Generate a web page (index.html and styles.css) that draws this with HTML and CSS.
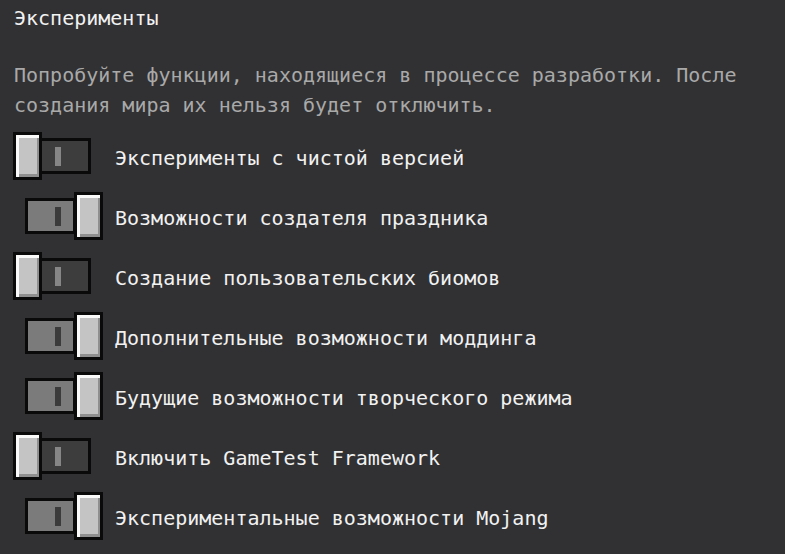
FILE: index.html
```html
<!DOCTYPE html>
<html lang="ru">
<head>
    <meta charset="UTF-8">
    <title>Эксперименты</title>
    <link rel="stylesheet" href="styles.css">
</head>
<body>

<div class="page">
    <h1 class="title">Эксперименты</h1>
    <p class="desc">Попробуйте функции, находящиеся в процессе разработки. После создания мира их нельзя будет отключить.</p>

    <div class="row">
        <div class="toggle off"><span class="knob"></span><span class="track"><i></i></span></div>
        <span class="label">Эксперименты с чистой версией</span>
    </div>
    <div class="row">
        <div class="toggle on"><span class="track"><i></i></span><span class="knob"></span></div>
        <span class="label">Возможности создателя праздника</span>
    </div>
    <div class="row">
        <div class="toggle off"><span class="knob"></span><span class="track"><i></i></span></div>
        <span class="label">Создание пользовательских биомов</span>
    </div>
    <div class="row">
        <div class="toggle on"><span class="track"><i></i></span><span class="knob"></span></div>
        <span class="label">Дополнительные возможности моддинга</span>
    </div>
    <div class="row">
        <div class="toggle on"><span class="track"><i></i></span><span class="knob"></span></div>
        <span class="label">Будущие возможности творческого режима</span>
    </div>
    <div class="row">
        <div class="toggle off"><span class="knob"></span><span class="track"><i></i></span></div>
        <span class="label">Включить GameTest Framework</span>
    </div>
    <div class="row">
        <div class="toggle on"><span class="track"><i></i></span><span class="knob"></span></div>
        <span class="label">Экспериментальные возможности Mojang</span>
    </div>
</div>

</body>
</html>
```

FILE: styles.css
```css
body {
    margin: 0;
    background-color: #313133;
    font-family: "DejaVu Sans Mono", "Liberation Mono", monospace;
    font-size: 20px;
    line-height: 30px;
    color: #f2f2f2;
}

.page {
    padding: 3px 0 0 13px;
}

.title {
    margin: 0 0 27px 1px;
    font-size: 20px;
    font-weight: normal;
    line-height: 30px;
}

.desc {
    margin: 0 0 6px 1px;
    color: #a9a9a9;
    width: 740px;
}

.row {
    height: 60px;
    display: flex;
    align-items: center;
}

.toggle {
    width: 90px;
    display: flex;
    align-items: center;
}

.toggle.on {
    padding-left: 12px;
    width: 78px;
}

.knob {
    width: 23px;
    height: 42px;
    border: 3px solid #0a0a0a;
    background-color: #c4c4c4;
    box-shadow: inset 3px 3px 0 #fafafa, inset -2px -3px 0 #8f8f8f;
}

.track {
    height: 30px;
    border: 3px solid #0a0a0a;
    display: flex;
    align-items: center;
}

.toggle.off .track {
    width: 33px;
    border-left: none;
    background-color: #3d3d3d;
    padding-left: 13px;
}

.toggle.on .track {
    width: 45px;
    background-color: #7b7b7b;
    margin-right: -2px;
}

.track i {
    display: block;
    width: 6px;
    height: 19px;
}

.toggle.off .track i {
    background-color: #868686;
}

.toggle.on .track i {
    margin-left: 27px;
    background-color: #3b3b3b;
}

.label {
    margin-left: 12px;
    padding-top: 4px;
}
```
